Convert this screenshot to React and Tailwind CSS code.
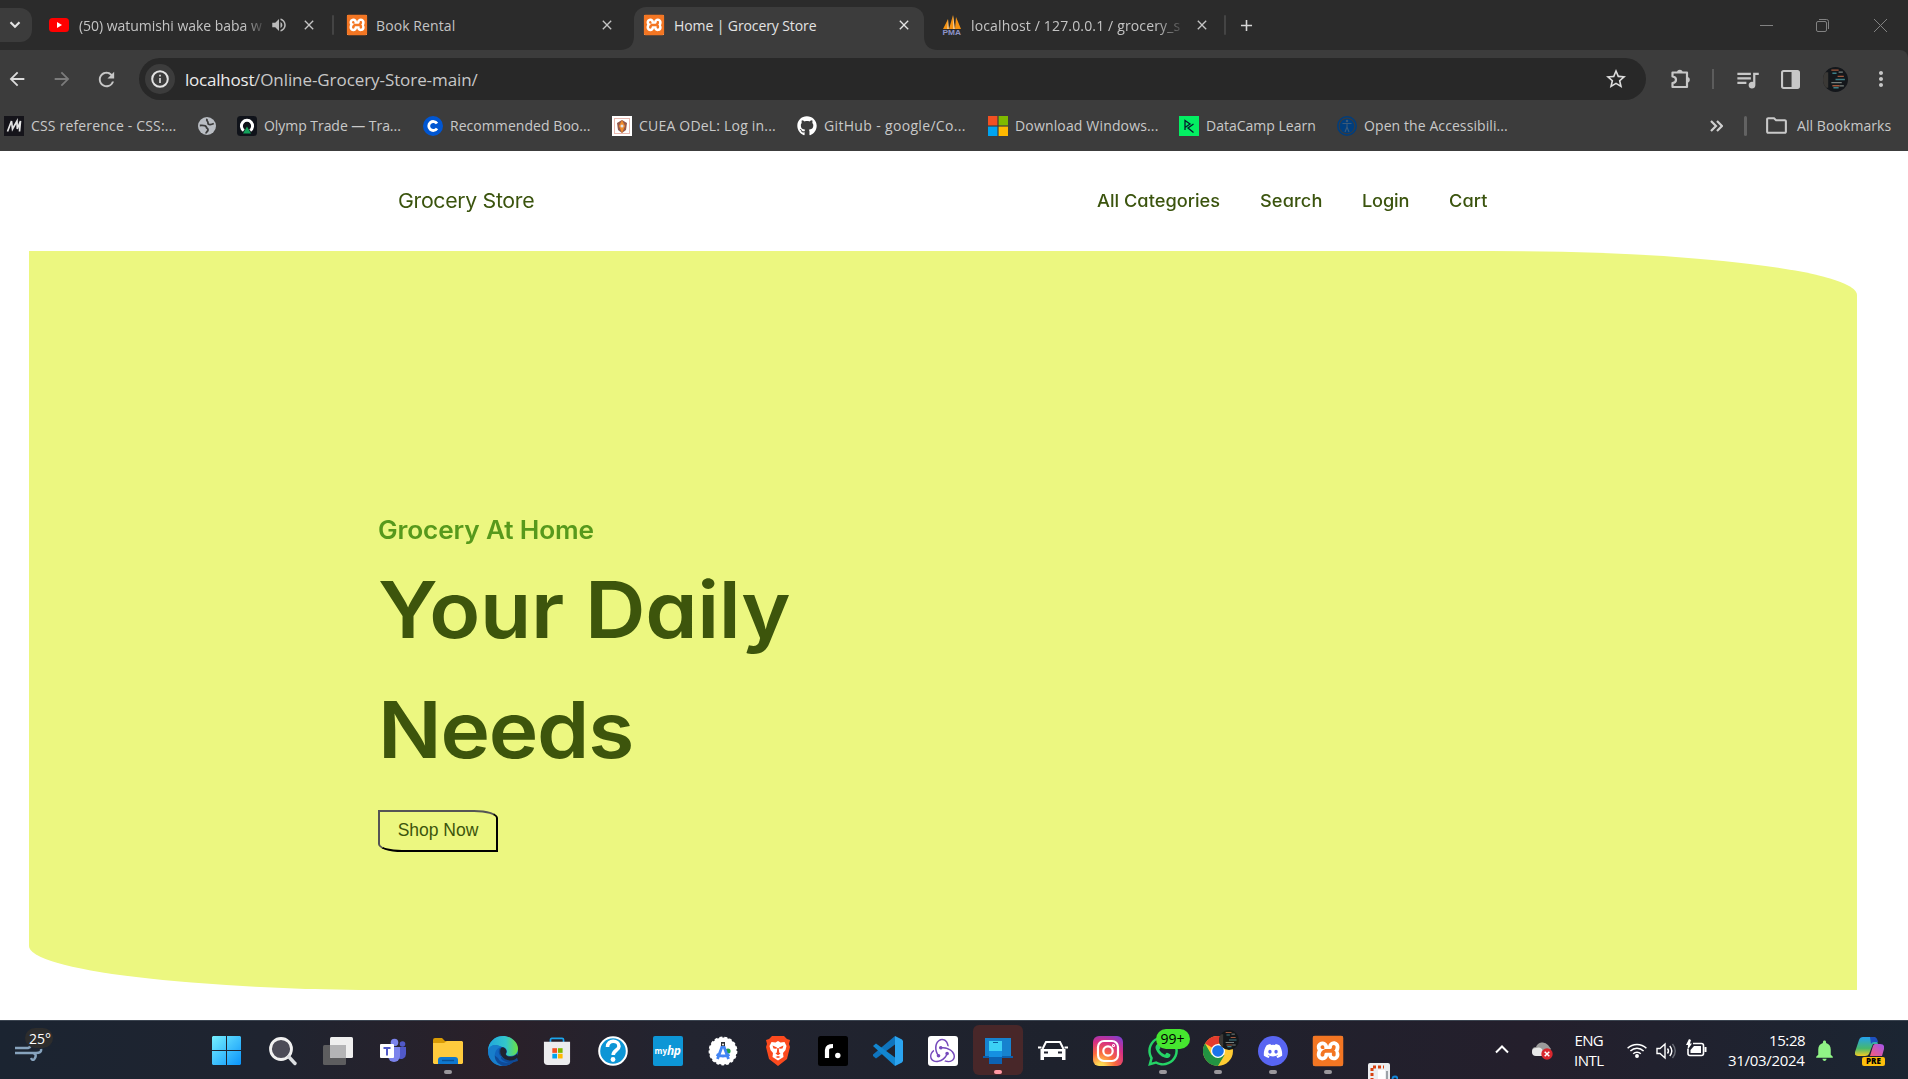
import { useLayoutEffect, useRef, useState } from "react";
import { SiXampp, SiRedux } from "react-icons/si";
import { FaGithub, FaWhatsapp, FaDiscord } from "react-icons/fa";
import {
  MdArrowBack,
  MdArrowForward,
  MdRefresh,
  MdClose,
  MdAdd,
  MdVolumeUp,
  MdStarOutline,
  MdQueueMusic,
  MdMoreVert,
  MdOutlineFolder,
  MdNotifications,
} from "react-icons/md";

/* Single-line label whose letter spacing is tuned to fill a given width.
   `stretch` widens the letterforms themselves. */
function Label({ w, stretch = 1, className = "", children }) {
  const ref = useRef(null);
  const [spacing, setSpacing] = useState(0);
  useLayoutEffect(() => {
    const natural = ref.current.offsetWidth;
    setSpacing((w / stretch - natural) / String(children).length);
  }, [w, stretch, children]);
  return (
    <span className={`block shrink-0 whitespace-nowrap ${className}`} style={{ width: w }}>
      <span
        ref={ref}
        className="inline-block origin-left"
        style={{ letterSpacing: `${spacing}px`, transform: stretch === 1 ? undefined : `scaleX(${stretch})` }}
      >
        {children}
      </span>
    </span>
  );
}

function Xampp({ className = "" }) {
  return (
    <span className={`block shrink-0 bg-white ${className}`}>
      <SiXampp className="h-full w-full scale-[1.04] text-[#f37623]" />
    </span>
  );
}

function Youtube() {
  return (
    <svg viewBox="0 0 20 14" className="h-[14px] w-5 shrink-0">
      <rect width="20" height="14" rx="3.5" fill="#f00" />
      <path d="M8 4l5 3-5 3z" fill="#fff" />
    </svg>
  );
}

function PhpMyAdmin() {
  return (
    <svg viewBox="0 0 20 22" className="mt-0.5 h-[22px] w-5 shrink-0">
      <path d="M1 14L6 4v10zM7 14L11 0l1 14zM13 14l1-12 5 12z" fill="#f29111" />
      <path d="M6 4l1 10H5zM11 0l2 14h-2z" fill="#f9c784" />
      <text
        x="0.5"
        y="19.800"
        fontSize="8"
        fontWeight="700"
        textLength="18.500"
        lengthAdjust="spacingAndGlyphs"
        fontFamily="Liberation Sans, sans-serif"
        fill="#8d93c8"
      >
        PMA
      </text>
    </svg>
  );
}

function Separator({ className = "" }) {
  return <span className={`h-5 w-0.5 shrink-0 rounded bg-[#444] ${className}`} />;
}

function TabStrip() {
  return (
    <div className="flex h-[50px] items-center bg-[#2b2b2b] text-[14px] text-[#c4c4c4]">
      <div className="flex h-[34px] w-8 items-center justify-center rounded-r-xl bg-[#3c3c3c] pr-[3px]">
        <svg viewBox="0 0 12 8" className="h-2 w-3" fill="none" stroke="#e3e3e3" strokeWidth="2.2">
          <path d="M1.5 1.3L6 5.8l4.500-4.500" />
        </svg>
      </div>
      <div className="flex w-[300px] items-center pl-[17px]">
        <Youtube />
        <div className="ml-2.5 w-[184px] [mask-image:linear-gradient(90deg,#000_165px,transparent_188px)]">
          <Label w={183}>(50) watumishi wake baba w</Label>
        </div>
        <MdVolumeUp className="ml-[7px] h-[18px] w-[18px] text-[#bbb]" />
        <MdClose className="ml-[13px] h-4 w-4" />
      </div>
      <Separator />
      <div className="flex w-[300px] items-center pl-[13px]">
        <Xampp className="h-5 w-5" />
        <Label w={79} className="ml-[9px]">Book Rental</Label>
        <MdClose className="mr-[19px] ml-auto h-4 w-4" />
      </div>
      <div className="relative mt-[7px] flex h-[43px] w-[290px] items-center rounded-t-xl bg-[#3c3c3c] pb-[7px] pl-2.5 text-[#e3e3e3]">
        <svg viewBox="0 0 14 14" className="absolute bottom-0 -left-3.5 h-3.5 w-3.5">
          <path d="M14 0v14H0C9 14 14 9 14 0z" fill="#3c3c3c" />
        </svg>
        <svg viewBox="0 0 14 14" className="absolute -right-3.5 bottom-0 h-3.5 w-3.5">
          <path d="M0 0v14h14C5 14 0 9 0 0z" fill="#3c3c3c" />
        </svg>
        <Xampp className="h-5 w-5" />
        <Label w={142} className="ml-2.5">Home | Grocery Store</Label>
        <MdClose className="mr-3 ml-auto h-4 w-4" />
      </div>
      <div className="flex w-[300px] items-center pl-[18px]">
        <PhpMyAdmin />
        <div className="ml-[9px] w-[210px] [mask-image:linear-gradient(90deg,#000_185px,transparent_216px)]">
          <Label w={209}>localhost / 127.0.0.1 / grocery_s</Label>
        </div>
        <MdClose className="mr-[14px] ml-auto h-4 w-4" />
      </div>
      <Separator />
      <MdAdd className="ml-[11px] h-[19px] w-[19px] text-[#d6d6d6]" />
      <div className="ml-auto flex items-center pr-[21px] text-[#828282]">
        <svg viewBox="0 0 13 13" className="h-[13px] w-[13px]" stroke="currentColor">
          <path d="M0 6.500h13" />
        </svg>
        <svg viewBox="0 0 13 13" className="ml-[43px] h-[13px] w-[13px]" fill="none" stroke="currentColor">
          <rect x=".5" y="2.500" width="10" height="10" rx="1.500" />
          <path d="M3 .5h7.500a2 2 0 012 2V10" />
        </svg>
        <svg viewBox="0 0 13 13" className="ml-[45px] h-[13px] w-[13px]" stroke="currentColor">
          <path d="M0 0l13 13M13 0L0 13" />
        </svg>
      </div>
    </div>
  );
}

function Avatar({ className = "" }) {
  return (
    <svg viewBox="0 0 24 24" className={`shrink-0 rounded-full ${className}`}>
      <rect width="24" height="24" fill="#14171b" />
      <path d="M0 5h5v15H0z" fill="#3b3936" />
      <path d="M8 3h7M14 9h6M9 18h7" stroke="#a0583c" strokeWidth="1.400" />
      <path d="M9 6h4M12 12h9M10 20h5" stroke="#3d7f86" strokeWidth="1.400" />
      <path d="M15 5h4M8 15h10M16 18h4" stroke="#77807c" strokeWidth="1.200" />
    </svg>
  );
}

function Toolbar() {
  return (
    <div className="flex h-[58px] items-center text-[#c7c7c7]">
      <MdArrowBack className="ml-[6px] h-[22px] w-[22px] text-[#dcdcdc]" />
      <MdArrowForward className="ml-[23px] h-[22px] w-[22px] text-[#7b7b7b]" />
      <MdRefresh className="ml-[22px] h-[23px] w-[23px]" />
      <div className="ml-[21px] flex h-[42px] w-[1507px] items-center rounded-full bg-[#282828] pl-1.5">
        <div className="flex h-[30px] w-[30px] items-center justify-center rounded-full bg-[#3c3c3c]">
          <svg viewBox="0 0 18 18" className="h-[18px] w-[18px]" fill="none" stroke="#e3e3e3" strokeWidth="2">
            <circle cx="9" cy="9" r="7.800" />
            <path d="M9 8v5M9 4.800v1.700" strokeWidth="1.600" />
          </svg>
        </div>
        <Label w={69} className="ml-2.5 pt-px text-[17px] text-[#ececec]">localhost</Label>
        <Label w={224} className="pt-px text-[17px] text-[#c7c7c7]">/Online-Grocery-Store-main/</Label>
        <MdStarOutline className="mr-[18px] ml-auto h-6 w-6 text-[#dcdcdc]" />
      </div>
      <svg viewBox="0 0 22 22" className="ml-[24px] h-[22px] w-[22px]">
        <path
          d="M2.500 4.500h14.500v14.500H2.500v-4q3.500-.5 3.500-3.300T2.500 8.500z"
          fill="none"
          stroke="currentColor"
          strokeWidth="2.200"
          strokeLinejoin="round"
        />
        <path d="M7 4.500a2.800 2.800 0 015.600 0zM17 9a2.800 2.800 0 010 5.600z" fill="currentColor" />
      </svg>
      <span className="ml-[20px] h-5 w-0.5 bg-[#5c5c5c]" />
      <MdQueueMusic className="ml-[20px] h-[27px] w-[27px]" />
      <svg viewBox="0 0 18 18" className="ml-[20px] h-[19px] w-[19px]">
        <rect x="1" y="1" width="16" height="16" rx="1.500" fill="none" stroke="currentColor" strokeWidth="2" />
        <path d="M10 1h7v16h-7z" fill="currentColor" />
      </svg>
      <Avatar className="ml-[23px] h-[25px] w-[25px]" />
      <MdMoreVert className="ml-[21px] h-6 w-6" />
    </div>
  );
}

function MicrosoftGrid({ className = "" }) {
  return (
    <svg viewBox="0 0 20 20" className={className}>
      <path d="M0 0h9.400v9.400H0z" fill="#f25022" />
      <path d="M10.600 0H20v9.400h-9.400z" fill="#7fba00" />
      <path d="M0 10.600h9.400V20H0z" fill="#00a4ef" />
      <path d="M10.600 10.600H20V20h-9.400z" fill="#ffb900" />
    </svg>
  );
}

function Bookmark({ icon, text, w, className = "" }) {
  return (
    <div className={`flex items-center ${className}`}>
      <span className="h-5 w-5 shrink-0">{icon}</span>
      <Label w={w} className="ml-[7px]">{text}</Label>
    </div>
  );
}

function Bookmarks() {
  return (
    <div className="flex h-[43px] items-center pb-[8px] text-[14px] text-[#c9c9c9]">
      <Bookmark
        className="ml-1"
        w={145}
        text="CSS reference - CSS:..."
        icon={
          <svg viewBox="0 0 20 20">
            <rect width="20" height="20" fill="#15141a" />
            <path d="M3.500 15.500L7.500 5l1 8L13 5l.3 8L16.500 5l-1 10.500" fill="none" stroke="#e5e5e5" strokeWidth="1.700" />
          </svg>
        }
      />
      <svg viewBox="0 0 18 18" className="ml-[22px] h-[18px] w-[18px]">
        <circle cx="9" cy="9" r="9" fill="#b9bdc3" />
        <path d="M1.800 8.500c3 0 6-.5 6.500 1.500s2 1 1.700 3-2 1.500-2 3.500M15.800 6.500c-2 1-6 2-5.800-.5S8 4.500 9 1.800" fill="none" stroke="#3c3c3c" strokeWidth="1.800" />
      </svg>
      <Bookmark
        className="ml-[21px]"
        w={137}
        text="Olymp Trade — Tra..."
        icon={
          <svg viewBox="0 0 20 20">
            <rect width="20" height="20" rx="3.500" fill="#10131a" />
            <path d="M6.800 14.500a5.600 5.600 0 116.400 0" fill="none" stroke="#fff" strokeWidth="3" />
            <path d="M10 10.500l4 7H6z" fill="#14a35c" />
          </svg>
        }
      />
      <Bookmark
        className="ml-[22px]"
        w={141}
        text="Recommended Boo..."
        icon={
          <svg viewBox="0 0 20 20">
            <circle cx="10" cy="10" r="10" fill="#0056d2" />
            <path d="M14 7.500a4.500 4.500 0 100 5" fill="none" stroke="#fff" strokeWidth="2.800" />
          </svg>
        }
      />
      <Bookmark
        className="ml-[21px]"
        w={137}
        text="CUEA ODeL: Log in..."
        icon={
          <svg viewBox="0 0 20 20">
            <rect width="20" height="20" fill="#fff" />
            <rect x="2.500" y="2.500" width="15" height="15" fill="none" stroke="#eab9b0" />
            <path d="M10 4l5 3-1 7-4 3-4-3-1-7z" fill="#94584a" />
            <path d="M10 4l3 6-3 7-3-7z" fill="#ef8b2c" />
            <circle cx="10" cy="10" r="1.500" fill="#dfe4ee" />
          </svg>
        }
      />
      <Bookmark className="ml-[21px]" w={142} text="GitHub - google/Co..." icon={<FaGithub className="h-5 w-5 text-white" />} />
      <Bookmark className="ml-[22px]" w={144} text="Download Windows..." icon={<MicrosoftGrid />} />
      <Bookmark
        className="ml-5"
        w={110}
        text="DataCamp Learn"
        icon={
          <svg viewBox="0 0 20 20">
            <rect width="20" height="20" fill="#03ef62" />
            <path d="M6 14V4.500l5 3.500-5 3.500M14.500 8l-5.500 4 5.500 4.500" fill="none" stroke="#05192d" strokeWidth="1.300" />
          </svg>
        }
      />
      <Bookmark
        className="ml-[21px]"
        w={144}
        text="Open the Accessibili..."
        icon={
          <svg viewBox="0 0 20 20" stroke="#003e7e" fill="none">
            <circle cx="10" cy="10" r="9.200" strokeWidth="1.600" />
            <circle cx="10" cy="10" r="7.300" fill="#003e7e" stroke="none" />
            <g stroke="#3c5a78" strokeWidth="1.100">
              <path d="M5.500 7.500h9M10 7.500v4M10 11l-2 5M10 11l2 5" />
              <circle cx="10" cy="5" r=".7" />
            </g>
          </svg>
        }
      />
      <svg viewBox="0 0 13 12" className="ml-auto h-3 w-[13px]" fill="none" stroke="#d0d0d0" strokeWidth="2.200">
        <path d="M1 1l5 5-5 5M7 1l5 5-5 5" />
      </svg>
      <span className="ml-[21px] h-5 w-[3px] rounded bg-[#626262]" />
      <MdOutlineFolder className="ml-[17px] h-[25px] w-[25px]" />
      <Label w={94} className="mr-[17px] ml-[8px]">All Bookmarks</Label>
    </div>
  );
}

function Page() {
  return (
    <main className="flex h-[869px] flex-col bg-white pr-[51px] pl-[29px] font-['Inter',sans-serif] [font-feature-settings:'cv11'] [font-optical-sizing:none]">
      <nav className="flex h-[100px] shrink-0 items-center pt-px pl-[369px] text-[17.5px] font-medium text-[#3b540e]">
        <Label w={136} stretch={1.04} className="text-[20.500px] font-normal">Grocery Store</Label>
        <Label w={123} stretch={1.04} className="ml-[563px]">All Categories</Label>
        <Label w={62} stretch={1.04} className="ml-10">Search</Label>
        <Label w={47} stretch={1.04} className="ml-10">Login</Label>
        <Label w={39} stretch={1.04} className="ml-10">Cart</Label>
      </nav>
      <section className="h-[739px] rounded-tr-[366px_44px] rounded-bl-[366px_44px] bg-[#ecf780] pt-[260px] pl-[349px]">
        <Label w={216} stretch={1.05} className="h-[39px] text-[25px] leading-[39px] font-semibold text-[#57991c]">
          Grocery At Home
        </Label>
        <h1 className="text-[78px] leading-[120px] font-semibold text-[#3d550c]">
          <Label w={412} stretch={1.075}>Your Daily</Label>
          <Label w={255} stretch={1.075}>Needs</Label>
        </h1>
        <button className="mt-5 flex h-[42px] w-[120px] items-center justify-center rounded-tr-[24px_8px] rounded-bl-[24px_8px] border-2 border-t-[#555] border-r-black border-b-black border-l-[#555] font-['Liberation_Sans',sans-serif] text-[#3d550c]">
          <Label w={81} className="pb-0.5 text-[17.5px]">Shop Now</Label>
        </button>
      </section>
    </main>
  );
}

function Cell({ children, running, active }) {
  return (
    <div className="relative flex h-[59px] w-[55px] shrink-0 items-center justify-center">
      {active && <span className="absolute top-[4px] left-[3px] h-[50px] w-[50px] rounded-md bg-[#482729]" />}
      <span className="relative flex h-[30px] w-[30px] items-center justify-center">{children}</span>
      {(running || active) && (
        <span
          className={
            active
              ? "absolute top-[49px] left-[24px] h-1 w-2 rounded-full bg-[#ff99a4]"
              : "absolute top-[49px] left-[24px] h-1 w-2 rounded-full bg-[#9a979c]"
          }
        />
      )}
    </div>
  );
}

function TaskIcons() {
  return (
    <div className="flex">
      <Cell>
        <svg viewBox="0 0 29 29" className="mr-[3px] h-[29px] w-[29px] shrink-0">
          <defs>
            <linearGradient id="win" x1="0" y1="0" x2="1" y2="1" gradientUnits="objectBoundingBox">
              <stop offset="0" stopColor="#76f0ff" />
              <stop offset="1" stopColor="#0a93fa" />
            </linearGradient>
          </defs>
          <path d="M1 0h13v14H0V1zM15 0h13l1 1v13H15zM0 15h14v14H1l-1-1zM15 15h14v13l-1 1H15z" fill="url(#win)" />
        </svg>
      </Cell>
      <Cell>
        <svg viewBox="0 0 30 30" fill="none">
          <circle cx="13" cy="13" r="10.500" fill="#4c4c58" stroke="#f1f1f1" strokeWidth="2.800" />
          <path d="M20.500 20.500l6.500 7" stroke="#dcdfe2" strokeWidth="3.400" strokeLinecap="round" />
        </svg>
      </Cell>
      <Cell>
        <svg viewBox="0 0 30 30">
          <rect y="9" width="23" height="20" rx="1.500" fill="#5d5d5f" />
          <rect x="7" y="1" width="23" height="21" rx="1.500" fill="#efefef" />
          <path d="M7 9h16v13H8.500L7 20.500z" fill="#b4b4b6" />
        </svg>
      </Cell>
      <Cell>
        <svg viewBox="0 0 30 30">
          <circle cx="16.500" cy="6.500" r="3.800" fill="#7b83eb" />
          <circle cx="24.500" cy="8" r="2.800" fill="#5059c9" />
          <path d="M20 11h8v7a5 5 0 01-8 4z" fill="#5059c9" />
          <path d="M10 11h12v9a6 6 0 01-12 0z" fill="#7b83eb" />
          <rect x="2" y="8" width="14" height="14" rx="1" fill="#fff" />
          <path d="M5.500 12h7M9 12v7.500" stroke="#5059c9" strokeWidth="2" />
        </svg>
      </Cell>
      <Cell running>
        <svg viewBox="0 0 30 30">
          <path d="M0 4q0-2 2-2h7l3 3h17v6H0z" fill="#d99b05" />
          <path d="M0 7h11l3-2h15l1 1v21l-1 1H1l-1-1z" fill="#ffcb3d" />
          <path d="M5 28v-4q0-3 3-3h14q3 0 3 3v4z" fill="#0f78cf" />
          <path d="M9 24.500h12" stroke="#095195" strokeWidth="1.400" />
        </svg>
      </Cell>
      <Cell>
        <svg viewBox="0 0 30 30">
          <defs>
            <linearGradient id="edge" x1="0" x2="1">
              <stop offset="0" stopColor="#20a7dd" />
              <stop offset=".6" stopColor="#33c6cb" />
              <stop offset="1" stopColor="#6be340" />
            </linearGradient>
          </defs>
          <circle cx="15" cy="15" r="15" fill="#1165bf" />
          <path d="M10 22c2 5 9 6.500 17 2-3 4-7 6-12 6C9 30 5 25 6 19z" fill="#0f4a97" />
          <path d="M0 15C0 6 7 0 15 0s15 6 15 12.500c0 4.500-3 7.500-7.500 7.500-3 0-5-1.200-4.300-2.200 2-2.500 0-6.800-4.200-6.800C7 8 2 9 0 15z" fill="url(#edge)" />
          <path d="M0 15c1-6 7-8 14-4-5 0-8 5-7 11 .6 3 3 6 8 8C7 30 0 24 0 15z" fill="#187ecb" />
          <path d="M14 11.500c-3.500.5-4.500 5-1.500 8.500 3.500 4 10.500 5 16.500 1.500l1 3.500-2 .5c-3 1.500-12 2-15-3z" fill="#0f4a97" />
          <path d="M14 11.200c2.500-.2 5.500 2.300 4.200 5.600-.7 1.200-.5 2.400 1 3.200 2.500 1.200 7 .8 10-2.500l.8 3.500-3 2.500c-5 2-11 .5-13.500-3.500-2-3.500-1.700-7 .5-8.800z" fill="#1f2330" />
        </svg>
      </Cell>
      <Cell>
        <svg viewBox="0 0 30 30" className="mr-0.5">
          <path d="M8 6V3q0-1.500 1.500-1.500h11Q22 1.500 22 3v3" fill="none" stroke="#1ba5ec" strokeWidth="1.800" />
          <path d="M1 5h28v21q0 4-4 4H5q-4 0-4-4z" fill="#ececee" />
          <path d="M10 12h5v5h-5z" fill="#f25022" />
          <path d="M16 12h5v5h-5z" fill="#7fba00" />
          <path d="M10 18h5v5h-5z" fill="#00a4ef" />
          <path d="M16 18h5v5h-5z" fill="#ffb900" />
        </svg>
      </Cell>
      <Cell>
        <svg viewBox="0 0 30 30">
          <circle cx="15" cy="15" r="13.800" fill="#0d96d6" stroke="#fff" strokeWidth="2" />
          <path d="M9.500 11c0-8 11.500-7 11.500-.8 0 4.300-5.800 4-5.800 8.800" fill="none" stroke="#fff" strokeWidth="3.600" />
          <circle cx="15" cy="23.500" r="2.400" fill="#fff" />
        </svg>
      </Cell>
      <Cell>
        <span className="flex h-[30px] w-[30px] items-center justify-center rounded-[2px] bg-[#0d96d6] text-[8px] font-bold text-white">
          my<i className="text-[12px] tracking-[-0.5px]">hp</i>
        </span>
      </Cell>
      <Cell>
        <svg viewBox="0 0 30 30">
          <circle cx="15" cy="15" r="13.600" fill="#fff" stroke="#fff" strokeWidth="1.600" strokeDasharray="3 2" />
          <circle cx="20" cy="15" r="2.600" fill="#1e9e4a" />
          <path d="M15 8L9.500 23M15 8l5.500 15M8.500 18.500q6.500 3 13 0" fill="none" stroke="#4285f4" strokeWidth="2.800" />
          <path d="M13 6h4v4h-4z" fill="#2f3237" />
          <circle cx="15" cy="8.500" r="1" fill="#fff" />
        </svg>
      </Cell>
      <Cell>
        <svg viewBox="0 0 26 30" className="h-[30px] w-[26px]">
          <path d="M7 0h12l3 3 3 1-1 4 1 3-3 12-9 7-9-7L1 11l1-3-1-4 3-1z" fill="#fb4a1e" />
          <path d="M6.500 6l4 .5L13 5l2.500 1.500 4-.5 2 4-1 4-2.500 3 .5 4-5.500 3.500L7.500 21l.5-4-2.500-3-1-4z" fill="#fff" />
          <path d="M7.500 9.500l4.500 2-.5 1.300-3-.3zM18.500 9.500l-4.500 2 .5 1.300 3-.3zM12.300 12h1.400l.5 4.500 1.300 1-2.500 1.700-2.500-1.700 1.300-1zM10.500 21l2.500-1 2.500 1-2.500 1z" fill="#fb4a1e" />
        </svg>
      </Cell>
      <Cell>
        <svg viewBox="0 0 30 30">
          <rect width="30" height="30" rx="2.500" fill="#000" />
          <path d="M9 22v-8q0-4 6-4" fill="none" stroke="#fff" strokeWidth="4.200" />
          <circle cx="19.800" cy="19.500" r="2.700" fill="#fff" />
        </svg>
      </Cell>
      <Cell>
        <svg viewBox="0 0 30 30">
          <path d="M22 0v8.500L3 22.500 0 20v-1.500z" fill="#0f74bd" />
          <path d="M0 10l3-2.500 19 14V30z" fill="#1286d0" />
          <path d="M22 0l7 3.500 1 1.500v20l-1 1.500-7 3.500z" fill="#2ba4f0" />
        </svg>
      </Cell>
      <Cell>
        <span className="flex h-[30px] w-[30px] items-center justify-center rounded-[3px] bg-white">
          <SiRedux className="h-[25px] w-[25px] text-[#764abc]" />
        </span>
      </Cell>
      <Cell active>
        <svg viewBox="0 0 30 30">
          <path d="M2 2h26v19H2z" fill="#1682cf" />
          <path d="M0 20h30v2H0z" fill="#0c5fae" />
          <path d="M6 5.500h13V28H6z" fill="#1590e2" />
          <path d="M6 5h13v10H6z" fill="#3cd0f5" />
          <path d="M6 21h13v7H6z" fill="#0c62b3" />
          <path d="M10 6.500h5" stroke="#0b5c9c" />
        </svg>
      </Cell>
      <Cell>
        <svg viewBox="0 0 30 30" fill="none" stroke="#fff">
          <path d="M4.500 13L8 6h14l3.500 7M0 11.500h3.500M26.500 11.500H30" strokeWidth="2" />
          <path d="M2.500 13h25v11h-3.500v-3h-18v3H2.500z" fill="#fff" stroke="none" />
          <path d="M6 16.500h4M20 16.500h4" stroke="#20232e" strokeWidth="2" />
        </svg>
      </Cell>
      <Cell>
        <span className="flex h-[30px] w-[30px] items-center justify-center rounded-md bg-[radial-gradient(circle_at_25%_105%,#ffdb55_10%,#fb6a3c_38%,#d52e86_68%,#7b3fd4_95%)]">
          <svg viewBox="0 0 24 24" className="h-6 w-6" fill="none" stroke="#fff" strokeWidth="2.200">
            <rect x="2" y="2" width="20" height="20" rx="6" />
            <circle cx="12" cy="12" r="4.700" />
            <circle cx="17.500" cy="6.500" r=".5" />
          </svg>
        </span>
      </Cell>
      <Cell running>
        <FaWhatsapp className="h-[34px] w-[34px] shrink-0 text-[#25d366]" />
        <span className="absolute -top-[7px] left-2 flex h-5 w-[34px] items-center justify-center rounded-full bg-[#46e62f] text-[14px] text-black">
          99+
        </span>
      </Cell>
      <Cell running>
        <svg viewBox="0 0 30 30">
          <circle cx="15" cy="15" r="15" fill="#fc3" />
          <path d="M15 15L2 7.500A15 15 0 0128 7.500H15z" fill="#e33b2e" />
          <path d="M2 7.500l6.500 11.300L21.500 19 15 30A15 15 0 012 7.500z" fill="#229342" />
          <circle cx="15" cy="15" r="7" fill="#fff" />
          <circle cx="15" cy="15" r="5.800" fill="#1a73e8" />
        </svg>
        <Avatar className="absolute -top-[6px] left-4 h-5 w-5" />
      </Cell>
      <Cell running>
        <span className="flex h-[30px] w-[30px] items-center justify-center rounded-full bg-[#5865f2]">
          <FaDiscord className="h-5 w-5 text-white" />
        </span>
      </Cell>
      <Cell running>
        <Xampp className="h-[30px] w-[30px] rounded-[2px]" />
      </Cell>
      <div className="h-[58px] w-[55px] overflow-hidden pt-[42px] pl-[13px]">
        <svg viewBox="0 0 30 24" className="h-6 w-[30px]">
          <rect width="22" height="24" rx="2" fill="#eceef0" />
          <path d="M4 18V4h12" fill="none" stroke="#d8410f" strokeWidth="3" strokeDasharray="3 2" />
          <path d="M10 7h7v17h-7z" fill="#fff" />
          <path d="M19 8v16" stroke="#9da2a8" strokeWidth="2" />
          <circle cx="27" cy="16" r="2.500" fill="none" stroke="#1486d8" strokeWidth="1.800" />
        </svg>
      </div>
    </div>
  );
}

function Tray() {
  return (
    <div className="ml-auto flex h-[57px] items-center text-[15px] leading-5 text-white">
      <svg viewBox="0 0 14 9" className="h-[9px] w-3.5" fill="none" stroke="#fff" strokeWidth="2">
        <path d="M1 7.500l6-6 6 6" />
      </svg>
      <svg viewBox="0 0 21 18" className="mt-[3px] ml-[23px] h-[18px] w-[21px]">
        <path d="M4 13a4 4 0 010-8 7 7 0 0112-2l3 4-6 6z" fill="#9b9b9b" />
        <path d="M4 14a4 4 0 010-8 6 6 0 016 1l2 7z" fill="#e8e8e8" />
        <circle cx="15" cy="12" r="5.700" fill="#d9272e" />
        <path d="M12.700 9.700l4.600 4.600M17.300 9.700l-4.600 4.600" stroke="#fff" strokeWidth="1.500" />
      </svg>
      <div className="ml-[21px] flex w-[30px] flex-col items-center">
        <Label w={29}>ENG</Label>
        <Label w={30}>INTL</Label>
      </div>
      <svg viewBox="0 0 20 16" className="ml-[23px] h-4 w-5" fill="none" stroke="#fff" strokeWidth="1.500">
        <path d="M.6 6.300a13.300 13.300 0 0118.800 0M3.400 9a9.300 9.300 0 0113.200 0M6.200 11.800a5.400 5.400 0 017.600 0" />
        <circle cx="10" cy="14" r="1.200" fill="#fff" />
      </svg>
      <svg viewBox="0 0 21 18" className="mt-0.5 ml-[9px] h-[18px] w-[21px]" fill="none" stroke="#fff" strokeWidth="1.400">
        <path d="M1 6.500h3l5-4.500v14l-5-4.500H1z" />
        <path d="M11.500 6.500q2 2.500 0 5M13.800 4q4 5 0 10" />
        <path d="M16.500 2q5.500 7 0 14" stroke="#696c75" />
      </svg>
      <svg viewBox="0 0 21 18" className="mb-[3px] ml-[9px] h-[18px] w-[21px]">
        <path d="M7 4.500h8.500q2 0 2 2v8q0 2-2 2H4q-2 0-2-2V10" fill="none" stroke="#fff" strokeWidth="1.600" />
        <path d="M8 7h7v7H4.500v-3z" fill="#fff" />
        <path d="M18.500 8h2v5h-2zM3 0L0 6h2l-.5 5L6 4.500H4L5 1z" fill="#fff" />
      </svg>
      <div className="ml-[21px] flex w-[77px] flex-col items-end">
        <Label w={36}>15:28</Label>
        <Label w={77}>31/03/2024</Label>
      </div>
      <MdNotifications className="mt-0.5 ml-[7px] h-[25px] w-[25px] text-[#91f486]" />
      <div className="relative mt-0.5 mr-[24px] ml-[18px] h-[30px] w-[29px]">
        <svg viewBox="0 0 29 30" className="absolute -top-px left-0 h-[30px] w-[29px]">
          <defs>
            <linearGradient id="cpa" x1="0" y1="0" x2="0" y2="1">
              <stop offset="0" stopColor="#24a1ef" />
              <stop offset=".6" stopColor="#47b86b" />
              <stop offset="1" stopColor="#f4cc25" />
            </linearGradient>
            <linearGradient id="cpb" x1="1" y1="0" x2="0" y2="1">
              <stop offset="0" stopColor="#a254ef" />
              <stop offset="1" stopColor="#f75c78" />
            </linearGradient>
          </defs>
          <path d="M8 2h10q3 0 4 4l1 3h-5l-4 10q-1 2-4 2H3q-4 0-3-4L4 5q1-3 4-3z" fill="url(#cpa)" />
          <path d="M15 2h4q3 0 4 5h-4q-2 0-3 2z" fill="#1e50bf" />
          <path d="M20 9h5q5 0 4 5l-2 7H15l3-10q.6-2 2-2z" fill="url(#cpb)" />
        </svg>
        <span className="absolute -right-px bottom-0 flex h-[9px] w-[23px] items-center justify-center rounded-[2px] bg-[#fdbf0c] text-[8px] font-extrabold text-black">
          PRE
        </span>
      </div>
    </div>
  );
}

function Taskbar() {
  return (
    <footer className="flex h-[59px] overflow-hidden border-t border-[#3b4450] bg-[linear-gradient(90deg,#1b2431_0%,#1f2430_14%,#2a2029_26%,#222430_36%,#1e222d_55%,#241f2c_80%,#1b2532_100%)] text-white">
      <div className="relative ml-[14px] h-[58px] w-[186px] shrink-0">
        <svg viewBox="0 0 30 20" className="mt-[20px] h-5 w-[30px]" fill="none" stroke="#87a3bd" strokeWidth="2.500">
          <path d="M1 7h13q4-1 2-5M1 12h21q6 0 5-4M12 12h7q4 1 2 5t-4 0" />
        </svg>
        <span className="absolute top-[7px] left-[11px] flex h-5 w-7 items-center justify-center rounded-full bg-[#2d2d2d] pl-0.5 text-[14px]">
          25°
        </span>
      </div>
      <TaskIcons />
      <Tray />
    </footer>
  );
}

export default function App() {
  return (
    <div className="h-[1079px] w-[1908px] overflow-hidden font-['Open_Sans','Noto_Sans',sans-serif]">
      <header className="h-[151px] bg-[#2b2b2b]">
        <TabStrip />
        <div className="rounded-tr-lg bg-[#3c3c3c]">
          <Toolbar />
          <Bookmarks />
        </div>
      </header>
      <Page />
      <Taskbar />
    </div>
  );
}
